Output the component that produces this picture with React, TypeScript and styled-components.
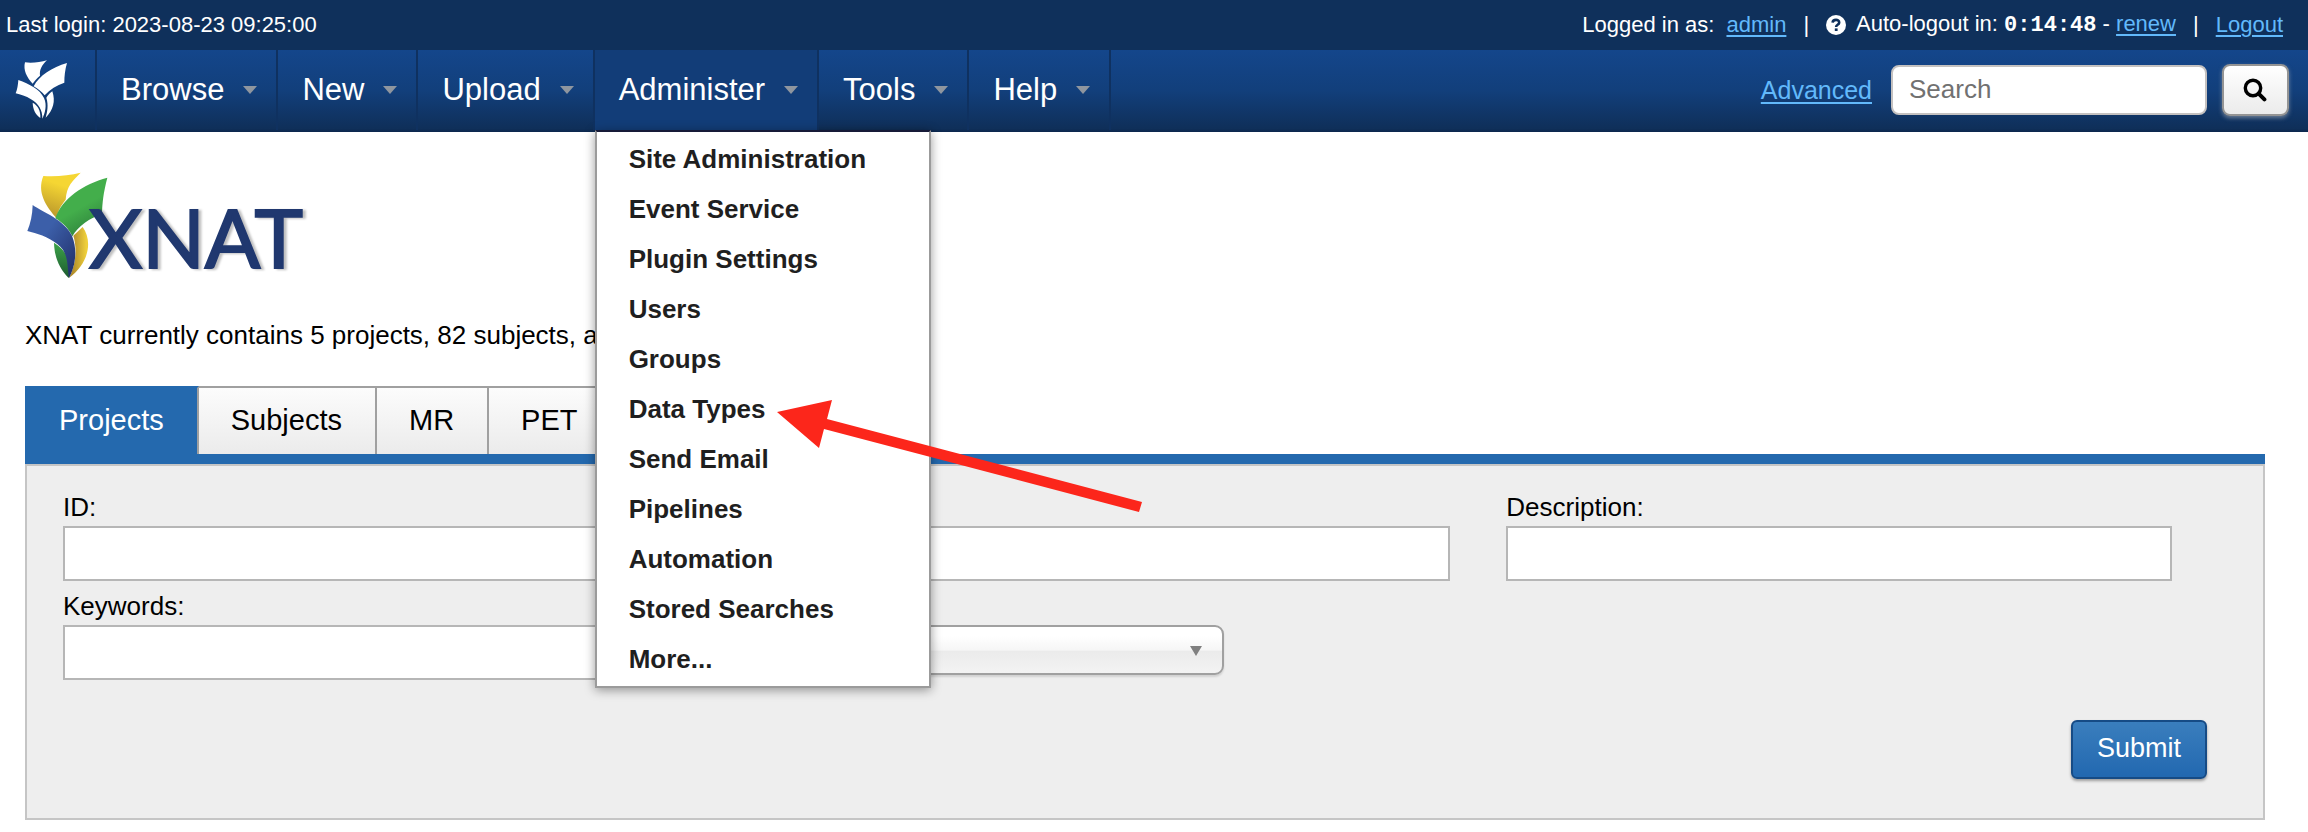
import React from "react";
import styled, { createGlobalStyle, css } from "styled-components";

const GlobalStyle = createGlobalStyle`
  *, *::before, *::after { box-sizing: border-box; }
  body {
    margin: 0;
    background: #fff;
    color: #000;
    font-family: "Liberation Sans", Arial, Helvetica, sans-serif;
    font-size: 26px;
    line-height: 30px;
  }
  button, input, select { font-family: inherit; }
`;

const link = css`
  color: #62b9fb;
  text-decoration: underline;
  text-decoration-thickness: 2px;
  text-underline-offset: 3px;
`;

const Link = styled.a`
  ${link}
`;

/* ---------- user bar ---------- */

const UserBar = styled.div`
  display: flex;
  align-items: center;
  justify-content: space-between;
  height: 50px;
  padding: 0 25px 0 6px;
  background: #0f305b;
  color: #fff;
  font-size: 22px;
  white-space: nowrap;
`;

const UserInfo = styled.div`
  display: flex;
  align-items: center;
  gap: 17px;
`;

const UserGroup = styled.span<{ $gap: number }>`
  display: flex;
  align-items: center;
  gap: ${(p) => p.$gap}px;
`;

const Countdown = styled.b`
  font-family: "Liberation Mono", "Courier New", monospace;
  font-size: 22px;
`;

/* ---------- main navigation ---------- */

const NavBar = styled.header`
  position: relative;
  z-index: 2;
  display: flex;
  justify-content: space-between;
  height: 82px;
  padding-bottom: 2px;
  background: linear-gradient(#14468b 0%, #123f7b 50%, #0f2f59 96%, #0c274d 100%);
`;

const NavList = styled.ul`
  display: flex;
  margin: 0;
  padding: 0;
  list-style: none;
`;

const NavItem = styled.li<{ $open?: boolean }>`
  position: relative;
  display: flex;
  border-right: 2px solid #0f3160;
  background: ${(p) => (p.$open ? "#123d78" : "transparent")};
`;

const HomeLink = styled.a`
  display: flex;
  align-items: center;
  width: 95px;
  padding-left: 15px;
`;

const NavButton = styled.button`
  display: flex;
  align-items: center;
  gap: 19px;
  padding: 0 19px 0 24px;
  border: 0;
  background: none;
  color: #fff;
  font-size: 31px;
`;

const Caret = styled.span`
  border: 7px solid transparent;
  border-top: 8px solid #8f969f;
  border-bottom: 0;
`;

const Menu = styled.ul`
  position: absolute;
  top: 100%;
  left: 0;
  width: 336px;
  margin: 0;
  padding: 2px 0;
  border: 2px solid #9b9b9b;
  border-top-color: #161a38;
  background: #fff;
  box-shadow: 0 2px 10px rgba(0, 0, 0, 0.4);
  list-style: none;
`;

const MenuItem = styled.li`
  position: relative;
`;

const MenuLink = styled.a`
  display: block;
  padding: 0 32px;
  color: #1f1f1f;
  font-weight: bold;
  line-height: 50px;
  text-decoration: none;
`;

const Pointer = styled.svg`
  position: absolute;
  top: 16px;
  left: 180px;
  pointer-events: none;
`;

const SearchArea = styled.form`
  display: flex;
  align-items: center;
  padding-right: 19px;
`;

const AdvancedLink = styled.a`
  ${link}
  margin-right: 19px;
  font-size: 25px;
`;

const SearchInput = styled.input`
  width: 316px;
  height: 50px;
  margin-right: 15px;
  padding: 0 16px 2px;
  border: 2px solid #c4c1c0;
  border-radius: 8px;
  background: #fff;
  font-size: 26px;
  &::placeholder { color: #717171; opacity: 1; }
`;

const SearchButton = styled.button`
  display: flex;
  align-items: center;
  justify-content: center;
  width: 67px;
  height: 52px;
  padding: 0 2px 0 0;
  border: 2px solid #949494;
  border-radius: 8px;
  background: linear-gradient(#fff, #ebebeb);
  box-shadow: 0 2px 4px rgba(200, 200, 200, 0.5);
`;

/* ---------- page body ---------- */

const Main = styled.main`
  padding: 33px 43px 12px 25px;
`;

const SiteLogo = styled.svg`
  display: block;
  overflow: visible;
`;

const LogoText = styled.text`
  fill: #20386f;
  stroke: #20386f;
  stroke-width: 2px;
  font-family: Lato, sans-serif;
  font-size: 82px;
  font-weight: 400;
  filter: drop-shadow(3px 1px 1px rgba(0, 0, 0, 0.25));
`;

const Summary = styled.p`
  margin: 35px 0 36px;
`;

const Tabs = styled.div`
  display: flex;
  height: 78px;
  border-bottom: 10px solid #2469ae;
`;

const Tab = styled.button<{ $active?: boolean }>`
  padding: 0 33px 2px 32px;
  border: 0;
  border-top: 2px solid #a0a0a0;
  border-right: 2px solid #a0a0a0;
  background: linear-gradient(#fcfcfc, #ebebeb);
  color: #000;
  font-size: 29px;
  ${(p) =>
    p.$active &&
    css`
      padding-left: 34px;
      border-top-color: #2469ae;
      background: #2469ae;
      color: #fff;
    `}
`;

const Panel = styled.form`
  padding: 26px 56px 39px 36px;
  border: 2px solid #c5c5c5;
  background: #eee;
`;

const Fields = styled.div`
  display: grid;
  grid-template-columns: repeat(3, 1fr);
  gap: 10px 56px;
  margin-right: 35px;
`;

const Field = styled.div<{ $unlabelled?: boolean }>`
  display: flex;
  flex-direction: column;
  align-items: flex-start;
  gap: 4px;
  padding-top: ${(p) => (p.$unlabelled ? "34px" : "0")};
`;

const TextInput = styled.input`
  width: 100%;
  height: 55px;
  padding: 0 12px;
  border: 2px solid #b6b6b6;
  background: #fff;
  font-size: 26px;
`;

const SelectBox = styled.div`
  position: relative;
  width: 439px;
`;

const Select = styled.select`
  appearance: none;
  display: block;
  width: 100%;
  height: 50px;
  padding: 0 12px;
  border: 2px solid #a0a0a0;
  border-radius: 9px;
  background: linear-gradient(#fff 20%, #f6f6f6 50%, #ebebeb 53%, #f3f3f3 100%);
  box-shadow: 0 2px 2px rgba(0, 0, 0, 0.12);
  color: #444;
  font-size: 26px;
`;

const SelectArrow = styled.span`
  position: absolute;
  top: 21px;
  right: 22px;
  border: 6px solid transparent;
  border-top: 10px solid #808080;
  border-bottom: 0;
  pointer-events: none;
`;

const Actions = styled.div`
  display: flex;
  justify-content: flex-end;
  margin-top: 40px;
`;

const SubmitButton = styled.button`
  height: 59px;
  padding: 0 24px 2px;
  border: 2px solid #164b85;
  border-radius: 6px;
  background: linear-gradient(#3a7ebd, #2268b0);
  box-shadow: 0 2px 3px rgba(0, 0, 0, 0.35);
  color: #fff;
  font-size: 27px;
`;

const navBefore = ["Browse", "New", "Upload"];
const navAfter = ["Tools", "Help"];
const adminItems = [
  "Site Administration",
  "Event Service",
  "Plugin Settings",
  "Users",
  "Groups",
  "Data Types",
  "Send Email",
  "Pipelines",
  "Automation",
  "Stored Searches",
  "More...",
];
const tabs = ["Projects", "Subjects", "MR", "PET"];

function NavEntry({ label }: { label: string }) {
  return (
    <NavItem>
      <NavButton type="button">
        {label}
        <Caret />
      </NavButton>
    </NavItem>
  );
}

function HomeIcon() {
  return (
    <svg width="53" height="60" viewBox="45 30 159 180" fill="#fff" aria-hidden="true">
      <path d="M75 37C98 40 121 36 141 31C125 46 118 60 120 77C110 85 104 93 98 101C80 82 69 60 75 37Z" />
      <path d="M201 39C195 60 193 78 193 98C170 106 150 118 134 136C126 126 114 116 101 109C118 76 156 52 201 39Z" />
      <path d="M55 90C88 102 120 118 132 144C142 165 135 190 127 206C127 180 117 162 93 148C78 138 61 134 47 130C52 118 54 104 55 90Z" />
      <path d="M157 124C167 154 160 180 137 203C142 185 146 165 139 143C144 135 150 129 157 124Z" />
      <path d="M98 158C113 166 122 180 121 204C107 194 99 180 98 158Z" />
    </svg>
  );
}

function Logo() {
  return (
    <SiteLogo width="280" height="120" viewBox="5 0 280 120" role="img" aria-label="XNAT">
      <defs>
        <linearGradient id="yellow" x1="0.7" y1="0" x2="0.4" y2="1">
          <stop offset="0.3" stopColor="#f5d633" />
          <stop offset="1" stopColor="#bb982b" />
        </linearGradient>
        <linearGradient id="green" x1="0.3" y1="0.2" x2="0.7" y2="1">
          <stop offset="0.4" stopColor="#43ae4b" />
          <stop offset="1" stopColor="#2c7d3a" />
        </linearGradient>
        <linearGradient id="stem" x1="0" y1="0" x2="0" y2="1">
          <stop offset="0" stopColor="#3da349" />
          <stop offset="1" stopColor="#1d5b30" />
        </linearGradient>
        <linearGradient id="gold" x1="0.2" y1="0" x2="0.9" y2="0">
          <stop offset="0" stopColor="#b28d2c" />
          <stop offset="1" stopColor="#efcf3a" />
        </linearGradient>
        <linearGradient id="blue" x1="0" y1="0" x2="0.9" y2="1">
          <stop offset="0.4" stopColor="#3c5fa9" />
          <stop offset="1" stopColor="#21306b" />
        </linearGradient>
      </defs>
      <g transform="scale(0.3333)">
        <path fill="url(#gold)" d="M188 186C217 225 210 292 147 339C168 300 172 250 160 212Z" />
        <path fill="url(#stem)" d="M102 233C103 275 118 312 146 339C158 310 150 262 102 233Z" />
        <path fill="url(#yellow)" d="M70 33C110 36 148 31 182 23C158 48 140 62 137 104C122 122 114 138 110 160C78 124 50 82 70 33Z" />
        <path fill="url(#green)" d="M262 38C250 85 247 112 246 148C210 158 175 184 157 214C145 190 130 174 106 160C126 100 190 58 262 38Z" />
        <path fill="url(#blue)" d="M38 120C70 142 132 164 156 212C176 262 162 312 147 339C141 300 146 262 112 237C84 215 50 205 22 198C32 175 37 150 38 120Z" />
      </g>
      <LogoText x="69" y="103">XNAT</LogoText>
    </SiteLogo>
  );
}

export default function App() {
  return (
    <>
      <GlobalStyle />
      <UserBar>
        <span>Last login: 2023-08-23 09:25:00</span>
        <UserInfo>
          <UserGroup $gap={12}>
            Logged in as: <Link href="#admin">admin</Link>
          </UserGroup>
          <span>|</span>
          <UserGroup $gap={10}>
            <svg width="20" height="20" viewBox="0 0 20 20" aria-hidden="true">
              <circle cx="10" cy="10" r="10" fill="#fff" />
              <path d="M6.6 7.6C6.8 3.9 13.3 3.9 13.2 7.6C13.1 9.9 10.1 9.7 10.1 12" fill="none" stroke="#0f305b" strokeWidth="2.6" />
              <rect x="8.8" y="13.4" width="2.8" height="2.6" fill="#0f305b" />
            </svg>
            <span>
              Auto-logout in: <Countdown>0:14:48</Countdown> - <Link href="#renew">renew</Link>
            </span>
          </UserGroup>
          <span>|</span>
          <Link href="#logout">Logout</Link>
        </UserInfo>
      </UserBar>

      <NavBar>
        <NavList>
          <NavItem>
            <HomeLink href="#home" aria-label="Home">
              <HomeIcon />
            </HomeLink>
          </NavItem>
          {navBefore.map((label) => (
            <NavEntry key={label} label={label} />
          ))}
          <NavItem $open>
            <NavButton type="button" aria-expanded="true">
              Administer
              <Caret />
            </NavButton>
            <Menu>
              {adminItems.map((item) => (
                <MenuItem key={item}>
                  <MenuLink href="#menu">{item}</MenuLink>
                  {item === "Data Types" && (
                    <Pointer width="366" height="113" viewBox="0 0 366 113" aria-hidden="true">
                      <path fill="#fc261b" d="M0 12L55 0L50 19L365 102L362 112L47 29L42 48Z" />
                    </Pointer>
                  )}
                </MenuItem>
              ))}
            </Menu>
          </NavItem>
          {navAfter.map((label) => (
            <NavEntry key={label} label={label} />
          ))}
        </NavList>
        <SearchArea>
          <AdvancedLink href="#advanced">Advanced</AdvancedLink>
          <SearchInput type="text" placeholder="Search" aria-label="Search" />
          <SearchButton type="button" aria-label="Run search">
            <svg width="24" height="24" viewBox="0 0 24 24" fill="none" stroke="#000" aria-hidden="true">
              <circle cx="10" cy="10" r="7.7" strokeWidth="3.4" />
              <path d="M15.6 15.6L21.4 21.4" strokeWidth="4" strokeLinecap="round" />
            </svg>
          </SearchButton>
        </SearchArea>
      </NavBar>

      <Main>
        <Logo />
        <Summary>XNAT currently contains 5 projects, 82 subjects, and</Summary>
        <Tabs>
          {tabs.map((tab, i) => (
            <Tab key={tab} type="button" $active={i === 0}>
              {tab}
            </Tab>
          ))}
        </Tabs>
        <Panel>
          <Fields>
            <Field>
              <label htmlFor="project-id">ID:</label>
              <TextInput id="project-id" type="text" />
            </Field>
            <Field $unlabelled>
              <TextInput type="text" aria-label="Title" />
            </Field>
            <Field>
              <label htmlFor="project-description">Description:</label>
              <TextInput id="project-description" type="text" />
            </Field>
            <Field>
              <label htmlFor="project-keywords">Keywords:</label>
              <TextInput id="project-keywords" type="text" />
            </Field>
            <Field $unlabelled>
              <SelectBox>
                <Select aria-label="Investigator">
                  <option value=""></option>
                </Select>
                <SelectArrow />
              </SelectBox>
            </Field>
          </Fields>
          <Actions>
            <SubmitButton type="button">Submit</SubmitButton>
          </Actions>
        </Panel>
      </Main>
    </>
  );
}
